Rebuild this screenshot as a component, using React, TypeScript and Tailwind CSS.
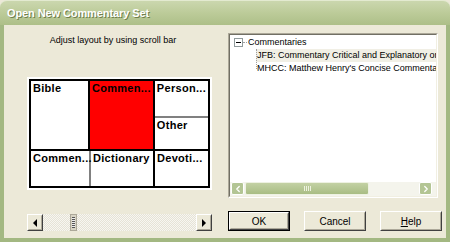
import { ChevronLeft, ChevronRight } from "lucide-react";

const ui = { fontFamily: '"Liberation Sans", Arial, sans-serif' };

/* classic 3d button face */
const Bevel = ({ children, className = "" }: { children?: React.ReactNode; className?: string }) => (
  <div className={`border border-t-white border-l-white border-b-[#404040] border-r-[#404040] bg-[#ece9d8] ${className}`}>
    <div className="flex h-full w-full items-center justify-center border border-t-[#ece9d8] border-l-[#ece9d8] border-b-[#aca899] border-r-[#aca899]">
      {children}
    </div>
  </div>
);

const Cell = ({ label, className = "" }: { label: string; className?: string }) => (
  <div className={`px-[2px] pt-[1px] text-[11px] font-bold leading-[13px] tracking-[0.3px] text-black ${className}`}>{label}</div>
);

function LayoutGrid() {
  return (
    <div className="ml-[23px] mt-[30px] w-[185px] bg-white p-[2px]">
      <div className="flex h-[109px] flex-col border-2 border-black">
        <div className="flex h-[70px] border-b-2 border-black">
          <Cell label="Bible" className="w-[63px] border-r-2 border-black" />
          <Cell label="Commen..." className="w-[63px] bg-[#ff0000]" />
          <div className="flex flex-1 flex-col border-l-2 border-black">
            <Cell label="Person..." className="h-[37px] border-b-2 border-[#808080]" />
            <Cell label="Other" className="flex-1" />
          </div>
        </div>
        <div className="flex flex-1">
          <Cell label="Commen..." className="w-[60px] border-r-2 border-[#808080]" />
          <Cell label="Dictionary" className="w-[64px] border-r-2 border-black" />
          <Cell label="Devoti..." className="flex-1" />
        </div>
      </div>
    </div>
  );
}

function ClassicScroll() {
  return (
    <div className="ml-[23px] mt-[24px] flex h-[17px] w-[185px] bg-[repeating-conic-gradient(#f7f6f1_0%_25%,#e6e3d6_0%_50%)] bg-[length:2px_2px]">
      <Bevel className="h-[17px] w-[16px]">
        <div className="h-0 w-0 border-y-[4px] border-r-[4px] border-y-transparent border-r-black" />
      </Bevel>
      <div className="ml-[27px] flex h-[17px] w-[7px] items-center justify-center border border-[#aca899] bg-[#d8d4c4]">
        <div className="h-[11px] w-[3px] bg-[repeating-linear-gradient(#555_0px,#555_1px,#eee_1px,#eee_2px)]" />
      </div>
      <div className="flex-1" />
      <Bevel className="h-[17px] w-[16px]">
        <div className="h-0 w-0 border-y-[4px] border-l-[4px] border-y-transparent border-l-black" />
      </Bevel>
    </div>
  );
}

function TreePanel() {
  return (
    <div className="mt-[8px] h-[165px] w-[210px] border border-t-[#aca899] border-l-[#aca899] border-b-white border-r-white">
      <div className="flex h-full flex-col border border-t-[#716f64] border-l-[#716f64] border-b-[#f1efe2] border-r-[#f1efe2] bg-white">
        <div className="relative flex-1 overflow-hidden text-[9px] leading-[13px] text-black">
          <div className="flex items-center pl-[4px] pt-[1px]">
            <div className="flex h-[9px] w-[9px] items-center justify-center border border-[#919b9c] bg-white">
              <div className="h-[1px] w-[5px] bg-black" />
            </div>
            <div className="h-0 w-[4px] border-t border-dotted border-[#a0a0a0]" />
            <span className="ml-[1px] whitespace-nowrap">Commentaries</span>
          </div>
          <div className="absolute left-[26px] top-[14px] h-[20px] border-l border-dotted border-[#a0a0a0]" />
          <div className="ml-[26px] flex items-center">
            <div className="h-0 w-[4px] border-t border-dotted border-[#a0a0a0]" />
            <span className="whitespace-nowrap bg-[#f1efe5] pl-[1px]">JFB: Commentary Critical and Explanatory on the Whole Bible</span>
          </div>
          <div className="ml-[26px] flex items-center">
            <div className="h-0 w-[4px] border-t border-dotted border-[#a0a0a0]" />
            <span className="whitespace-nowrap pl-[1px]">MHCC: Matthew Henry's Concise Commentary</span>
          </div>
        </div>
        <div className="flex h-[14px] bg-[#f4f4ec] px-[1px] pb-[1px]">
          <div className="flex h-[13px] w-[13px] items-center justify-center rounded-[2px] border border-white bg-[#b3c594] text-white">
            <ChevronLeft size={10} strokeWidth={3} />
          </div>
          <div className="ml-[1px] flex h-[13px] w-[124px] items-center justify-center rounded-[2px] border border-[#eef2e2] bg-gradient-to-b from-[#c3d1a4] to-[#a9bd84]">
            <div className="h-[5px] w-[7px] bg-[repeating-linear-gradient(90deg,#eef2e0_0px,#eef2e0_1px,transparent_1px,transparent_2px)]" />
          </div>
          <div className="flex-1" />
          <div className="flex h-[13px] w-[13px] items-center justify-center rounded-[2px] border border-white bg-[#b3c594] text-white">
            <ChevronRight size={10} strokeWidth={3} />
          </div>
          <div className="w-[3px]" />
        </div>
      </div>
    </div>
  );
}

export default function App() {
  return (
    <div className="flex h-[242px] w-[450px] flex-col overflow-hidden bg-[#ece9d8]" style={ui}>
      <div className="flex h-[25px] items-center rounded-t-[7px] border-t border-[#e3ead0] bg-gradient-to-b from-[#cbd7ae] via-[#bccb99] to-[#adbf88] pl-[7px]">
        <span className="text-[11px] font-bold tracking-[-0.1px] text-white [text-shadow:1px_1px_0_#6f7f4c]">Open New Commentary Set</span>
      </div>
      <div className="flex flex-1 border-x-4 border-b-4 border-[#a3b882]">
        <div className="flex w-[218px] flex-col">
          <div className="mt-[9px] text-center text-[9px] leading-[13px] text-black">Adjust layout by using scroll bar</div>
          <LayoutGrid />
          <ClassicScroll />
        </div>
        <div className="flex flex-col pl-[6px]">
          <TreePanel />
          <div className="mt-[13px] flex gap-[14px] text-[10px] text-black">
            <div className="h-[20px] w-[62px] border border-black">
              <Bevel className="h-full w-full">OK</Bevel>
            </div>
            <Bevel className="h-[20px] w-[62px]">Cancel</Bevel>
            <Bevel className="h-[20px] w-[62px]"><span><u>H</u>elp</span></Bevel>
          </div>
        </div>
      </div>
    </div>
  );
}
